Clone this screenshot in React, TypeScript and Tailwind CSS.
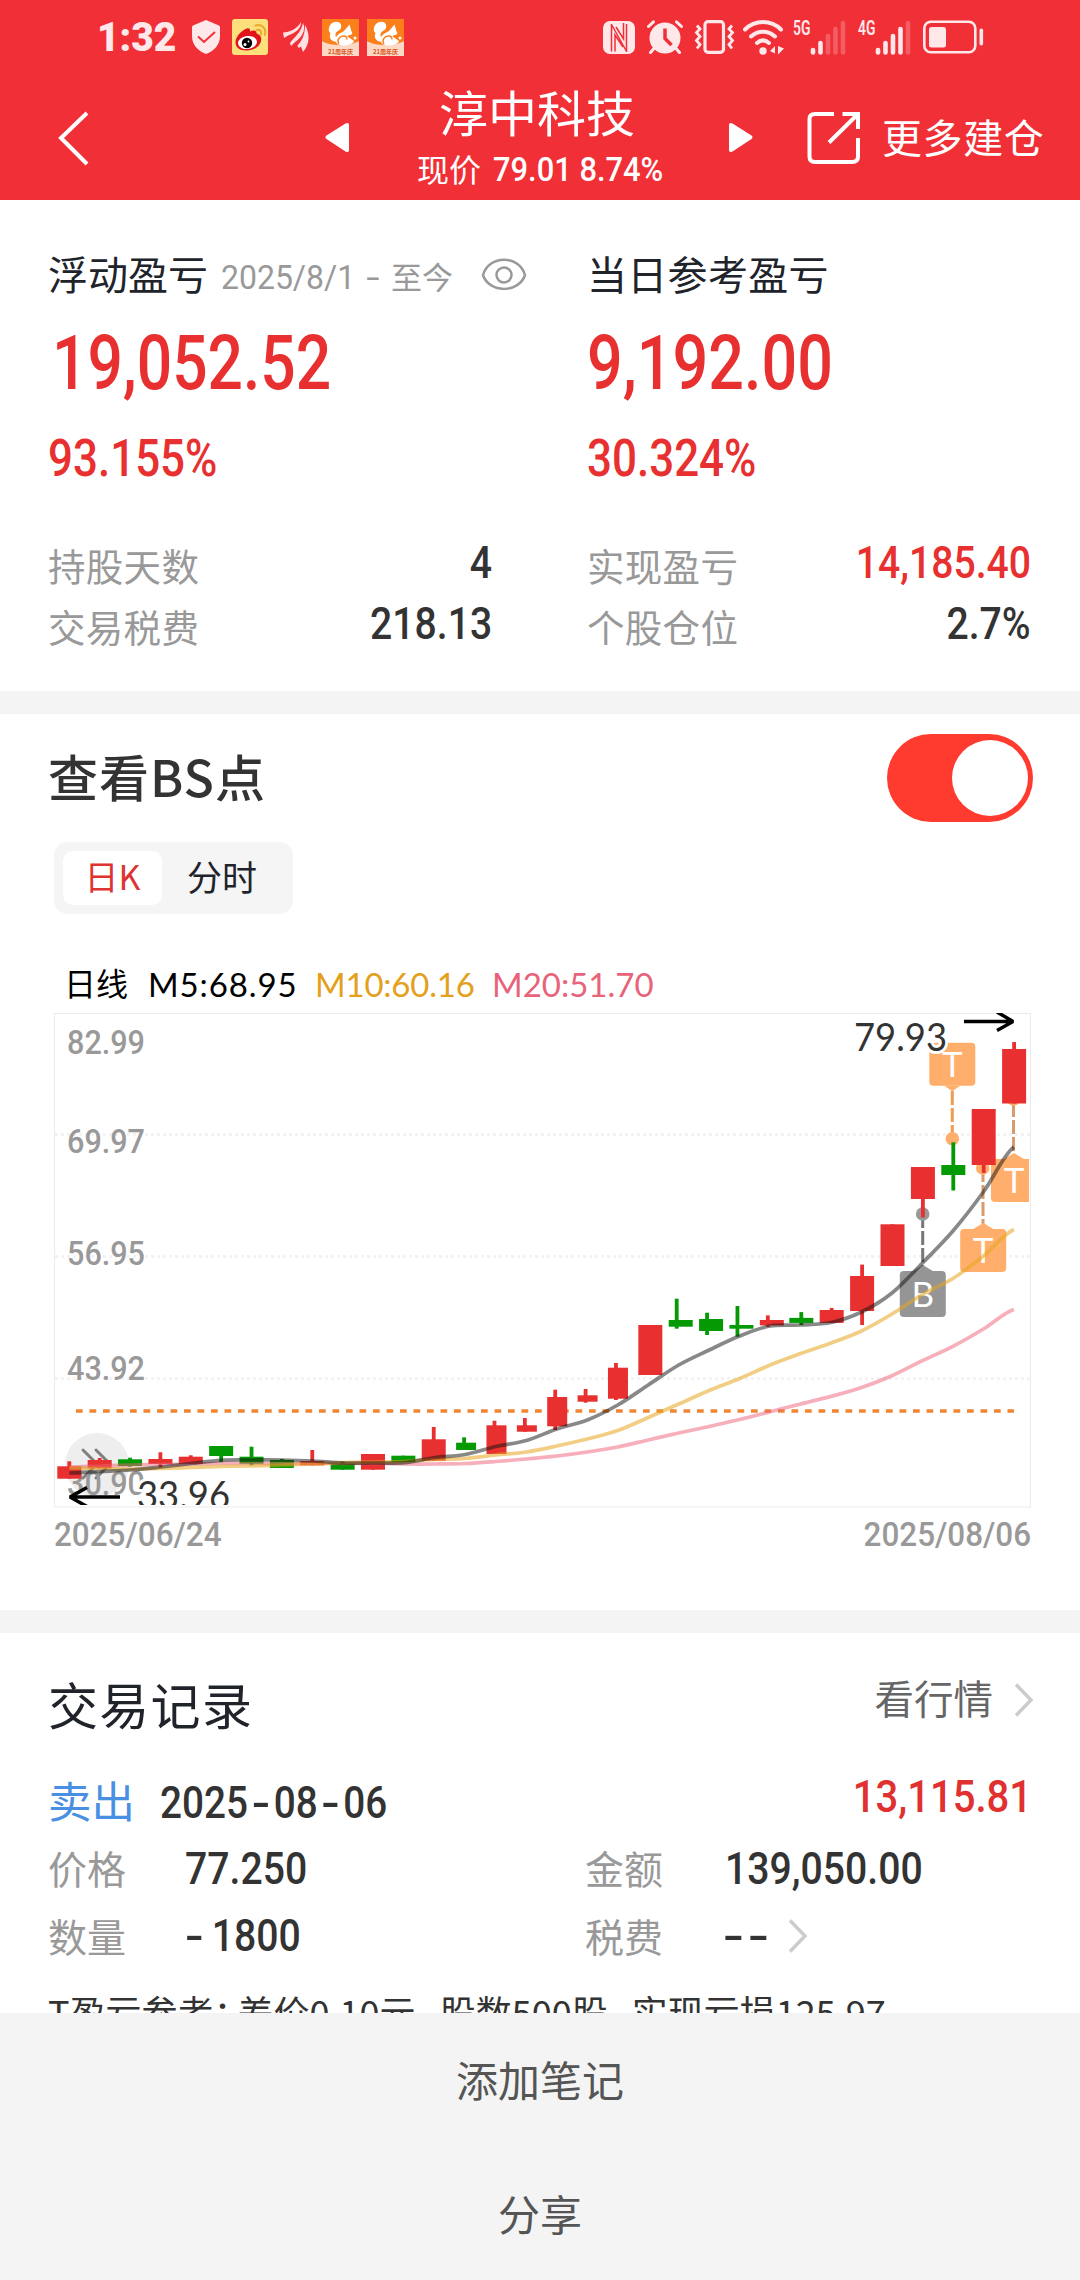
import React from 'react';

type Tone = 'up' | 'down';

interface ICandle {
  tone: Tone;
  top: number;
  bottom: number;
  high: number;
  low: number;
}

interface IStat {
  label: string;
  value: string;
  className: string;
}

const c = (
  tone: Tone,
  top: number,
  bottom: number,
  high: number,
  low: number
): ICandle => ({ tone, top, bottom, high, low });

const FIRST_X = 69.3;
const STEP = 30.47;

const candles: ICandle[] = [
  c('up', 1466.3, 1478.7, 1461.3, 1478.7),
  c('up', 1460, 1468.3, 1458, 1468.3),
  c('down', 1459.3, 1466, 1457.7, 1466.7),
  c('up', 1459, 1464, 1452.3, 1467.3),
  c('up', 1456.7, 1464, 1455.3, 1464),
  c('down', 1446, 1456, 1446, 1462),
  c('down', 1456.7, 1463.7, 1446.7, 1465.3),
  c('down', 1460, 1468, 1459, 1468),
  c('up', 1461, 1465.3, 1450, 1465.3),
  c('down', 1463.7, 1469.7, 1461.3, 1469.7),
  c('up', 1454, 1469.7, 1454, 1469.7),
  c('down', 1455.7, 1462, 1455.7, 1462),
  c('up', 1439.3, 1460.7, 1427, 1460.7),
  c('down', 1442.7, 1450, 1437.3, 1450),
  c('up', 1425.3, 1454, 1420.7, 1454),
  c('up', 1425.3, 1431.7, 1418, 1431.7),
  c('up', 1397, 1426.3, 1389.7, 1430),
  c('up', 1395.3, 1401.7, 1389, 1402.7),
  c('up', 1367.7, 1398.7, 1363, 1400),
  c('up', 1325, 1375, 1325, 1375),
  c('down', 1320, 1326.7, 1298.7, 1328.7),
  c('down', 1319, 1331, 1312.7, 1335),
  c('down', 1325, 1328.7, 1306, 1336.7),
  c('up', 1320, 1325.4, 1315.4, 1326.8),
  c('down', 1317.9, 1322.9, 1312.1, 1325),
  c('up', 1310, 1322.9, 1307.9, 1322.9),
  c('up', 1276, 1311, 1264.6, 1325),
  c('up', 1224.3, 1266, 1224.3, 1266),
  c('up', 1167, 1199, 1167, 1217.5),
  c('down', 1165, 1175, 1142.3, 1190.5),
  c('up', 1109, 1165, 1109, 1173),
  c('up', 1049, 1103.5, 1042, 1103.5),
];

const ma5 = [
  1473, 1471.5, 1470, 1467, 1463.5, 1460.3, 1460, 1460, 1461, 1463, 1463, 1462.7,
  1457.5, 1454.5, 1446.5, 1440.5, 1429, 1420, 1405, 1385, 1365, 1350, 1336, 1326,
  1325, 1322.5, 1312, 1293, 1263, 1231, 1192, 1147,
];
const ma10 = [
  1468, 1468.5, 1469, 1468.5, 1467.5, 1466.5, 1466, 1465, 1464, 1462.5, 1462, 1461.5,
  1459.5, 1458.5, 1455, 1452, 1446, 1439, 1430.5, 1417.5, 1404, 1390.5, 1378.5, 1365,
  1353.6, 1343, 1331, 1314, 1294.5, 1278.5, 1256, 1229.5,
];
const ma20 = [
  1467, 1466, 1465, 1464.5, 1464, 1463.5, 1463.5, 1463.5, 1463.5, 1463.5, 1463.5, 1464,
  1464, 1463.5, 1461.5, 1459, 1456, 1452, 1447, 1440, 1433, 1426.5, 1419.5, 1411.8,
  1404, 1396.4, 1387.5, 1375.7, 1360.7, 1346.4, 1329, 1309.5,
];

const pointX = (i: number) => FIRST_X + STEP * i;

// Wick position, then the body's left edge and width around it
const candleBox = (i: number) => {
  const x = i < 24 ? FIRST_X + 30.37 * i : 801.3 + 30.4 * (i - 24);
  const shifted = i > 12 && i < 24;
  return { x, left: shifted ? x - 8 : x - 12, width: i > 12 && i < 19 ? 20 : 24 };
};

// Smooths a series with Catmull-Rom control points
const toPath = (ys: number[]) =>
  ys.reduce((d, y, i) => {
    const x = pointX(i);
    if (i === 0) return `M${x} ${y}`;
    const before = ys[i - 2] ?? ys[i - 1];
    const prev = ys[i - 1];
    const next = ys[i + 1] ?? y;
    const third = STEP / 3;
    return `${d}C${x - 2 * third} ${prev + (y - before) / 6} ${x - third} ${
      y - (next - prev) / 6
    } ${x} ${y}`;
  }, '');

const axis = [
  { label: '82.99', y: 1054 },
  { label: '69.97', y: 1153 },
  { label: '56.95', y: 1265 },
  { label: '43.92', y: 1380 },
  { label: '30.90', y: 1495 },
];

const leftStats: IStat[] = [
  { label: '持股天数', value: '4', className: 'text-[#333]' },
  { label: '交易税费', value: '218.13', className: 'text-[#333]' },
];
const rightStats: IStat[] = [
  { label: '实现盈亏', value: '14,185.40', className: 'text-[#e7302f]' },
  { label: '个股仓位', value: '2.7%', className: 'text-[#333]' },
];

function ShieldIcon() {
  return (
    <svg className="w-7 h-[34px]" viewBox="0 0 28 34">
      <path d="M14 0 27 5.500Q28 6 28 7.500V16C28 25 22 31 14 34 6 31 0 25 0 16V7.500Q0 6 1 5.500Z" fill="#ffe8ea" />
      <path d="M6 16.500 12 22 23 12" fill="none" stroke="#f12f37" strokeWidth="2" />
    </svg>
  );
}

function WeiboIcon() {
  return (
    <svg className="w-9 h-9" viewBox="0 0 36 36">
      <rect width="36" height="36" rx="3" fill="#fddf7c" />
      <path d="M15 9.500c2-.8 3.500.5 3 3 3-1.500 7-1.500 6.500 2 2.500.8 5 2.500 4.700 6C29 27 22 31.500 14.500 31.500S3.500 28 3.500 23C3.500 18 10 10.800 15 9.500Z" fill="#e2141b" />
      <ellipse cx="15.500" cy="23.500" rx="9.500" ry="6.500" fill="#fff" transform="rotate(-7 15.500 23.500)" />
      <circle cx="15" cy="24" r="5.200" fill="#000" />
      <circle cx="13" cy="25.500" r="1.500" fill="#fff" />
      <circle cx="16.500" cy="22.500" r=".9" fill="#fff" />
      <g fill="none" stroke="#eba92c" strokeWidth="2" strokeLinecap="round">
        <path d="M23.500 6.500C29.500 4.500 35 9.500 32.800 16" />
        <path d="M24.500 11C28 10 30 12.500 29 15.500" />
      </g>
    </svg>
  );
}

function WingIcon() {
  return (
    <svg className="w-[26px] h-[30px]" viewBox="0 0 26 30" fill="#ffe0e3">
      <path d="M0 10.500C7 10 14 7 18 0c.8 7-8 12-12 13L1 16Z" />
      <path d="M7 21C11 15 18 11 20 1c4 8-3 16-8.500 19.500L8 24Z" />
      <path d="M14.500 23.500C20 18 22 11 22 3c5.500 9 4.500 20-2 27L18 24.500 15.500 26Z" />
    </svg>
  );
}

function SquirrelIcon() {
  return (
    <svg className="w-[37px] h-[37px]" viewBox="0 0 37 37">
      <rect width="37" height="37" fill="#fb7f1b" />
      <path d="M0 22C8 27.500 28 27.500 37 22V37H0Z" fill="#fbd9c4" />
      <path d="M13 3C17.500 2 21 6 18.500 10 17 12 14 12 13.500 15c-.3 2.500 1.500 3.500 1 8-5.500-1-8-4-6-9C5 12.500 7 3.500 13 3Z" fill="#fff" />
      <path d="M22 12 27.500 5.500 29.500 12.500C31 14 30.500 16 27 16l-1.500 1.500 6.500 4.500c-.5 4.500-16 7-18 1C12 18 16 15 22 12Z" fill="#fff" />
      <path d="M17 25c-3-4 1-8 4.500-8 2 0 3.500 1.500 3.500 3.500" fill="none" stroke="#fb7f1b" strokeWidth="1.300" />
      <circle cx="33" cy="19" r="1.500" fill="#fff" />
      <text x="18.500" y="35" textAnchor="middle" className="font-['Noto_Sans_CJK_SC',sans-serif] text-[6px] font-bold" fill="#d9541c">
        21周年庆
      </text>
    </svg>
  );
}

function NfcIcon() {
  return (
    <svg className="w-8 h-[33px]" viewBox="0 0 32 33">
      <rect width="32" height="33" rx="7" fill="#ffe8ea" />
      <path d="M8.500 3V30.500M23.500 3V31M8.500 3.500 23 29.500M12 30.500V14L20 26M20.500 2V18L13 6" fill="none" stroke="#f12f37" strokeWidth="1.500" />
    </svg>
  );
}

function AlarmIcon() {
  return (
    <svg className="w-9 h-[34px]" viewBox="0 0 36 34">
      <circle cx="18" cy="18" r="15.500" fill="#ffe8ea" />
      <g fill="none" stroke="#ffe8ea" strokeWidth="3" strokeLinecap="round">
        <path d="M1.500 6.500 6.500 1.800M34.500 6.500 29.500 1.800M6.500 29 3.500 32.500M29.500 29 32.500 32.500" />
      </g>
      <path d="M18 8.500V18.500L24.500 25" fill="none" stroke="#f12f37" strokeWidth="3.500" />
    </svg>
  );
}

function VibrateIcon() {
  return (
    <svg className="w-[41px] h-[34px]" viewBox="0 0 41 34" fill="none" stroke="#ffe8ea">
      <rect x="11" y="1.700" width="18.500" height="30.600" rx="3" strokeWidth="3.200" />
      <path d="M3 5.500 6 9 2.500 12.500 6 16.500 2.500 20.500 6 24.500 3 28.500M38 5.500 35 9 38.500 12.500 35 16.500 38.500 20.500 35 24.500 38 28.500" strokeWidth="2.800" />
    </svg>
  );
}

function WifiIcon() {
  return (
    <svg className="w-[42px] h-[35px]" viewBox="0 0 42 35">
      <g fill="none" stroke="#ffe8ea" strokeWidth="4" strokeLinecap="round">
        <path d="M2 9.500C12-.5 28-.5 38 9.500" />
        <path d="M8 16.500C15 10 25 10 32 16.500" />
        <path d="M14 23C18 19.500 22 19.500 26 23" />
      </g>
      <circle cx="20" cy="31" r="3.700" fill="#ffe8ea" />
      <path d="M32 26V33.500L27 31ZM35 26 41 28.500 35 34.500Z" fill="#ffe8ea" />
    </svg>
  );
}

function SignalIcon({ label, strength }: { label: string; strength: number }) {
  return (
    <div className="flex items-start">
      <span className="w-[17px] h-[35px] font-['Roboto',sans-serif] text-[21px]/[16px] font-semibold">
        <span className="inline-block origin-left scale-x-[0.66]">{label}</span>
      </span>
      <svg className="w-[36px] h-[35px]" viewBox="0 0 36 35" stroke="#ffe8ea" strokeWidth="4.600" strokeLinecap="round">
        {[29, 23, 16, 9, 3].map((y, i) => (
          <path
            key={y}
            d={`M${3 + i * 7.500} ${i === 0 ? 30 : y}V32.500`}
            opacity={i < strength ? 1 : 0.25}
          />
        ))}
      </svg>
    </div>
  );
}

function BatteryIcon() {
  return (
    <svg className="w-[61px] h-[34px]" viewBox="0 0 61 34">
      <rect x="1.300" y="1.800" width="51" height="30.500" rx="6.500" fill="none" stroke="#ffe8ea" strokeWidth="2.600" />
      <rect x="6" y="7" width="17" height="20.500" rx="2.500" fill="#ffe8ea" />
      <rect x="56.500" y="8.500" width="3.600" height="17" rx="1.800" fill="#ffe8ea" />
    </svg>
  );
}

function StatusBar() {
  return (
    <div className="flex h-[74px] pl-[97px] pr-[96px] items-center justify-between text-[#ffe8ea]">
      <div className="flex items-center">
        <span className="w-[95px] font-['Roboto',sans-serif] text-[41px]/[40px] font-black">
          <span className="inline-block origin-left scale-x-[0.95]">1:32</span>
        </span>
        <ShieldIcon />
        <span className="ml-3 mr-[15px]">
          <WeiboIcon />
        </span>
        <WingIcon />
        <span className="ml-[13px] mr-2">
          <SquirrelIcon />
        </span>
        <SquirrelIcon />
      </div>
      <div className="flex items-center">
        <NfcIcon />
        <span className="ml-3">
          <AlarmIcon />
        </span>
        <span className="ml-[11px]">
          <VibrateIcon />
        </span>
        <span className="ml-2">
          <WifiIcon />
        </span>
        <span className="ml-2">
          <SignalIcon label="5G" strength={2} />
        </span>
        <span className="ml-3">
          <SignalIcon label="4G" strength={4} />
        </span>
        <span className="ml-3">
          <BatteryIcon />
        </span>
      </div>
    </div>
  );
}

function Header() {
  return (
    <header className="h-[200px] shrink-0 bg-[#f12f37] text-white">
      <StatusBar />
      <div className="flex h-[126px]">
        <svg className="mt-9 ml-[57px] w-8 h-14" viewBox="0 0 32 56" fill="none" stroke="#fff" strokeWidth="4">
          <path d="M30 3 4 28 30 54" />
        </svg>
        <svg className="mt-[48px] ml-[236px] w-[26px] h-[31px]" viewBox="0 0 26 31" fill="#fff">
          <path d="M1.500 13.500 20.500 1.500Q24 0 24 3V28Q24 31 20.500 29.500L1.500 17Q-.5 15.200 1.500 13.500Z" />
        </svg>
        <div className="w-[378px]">
          <div className="mt-[9px] h-[56px] pl-[88px] text-[49px]/[56px]">淳中科技</div>
          <div className="flex h-10 mt-[12px] pl-[66px] text-[32px]/[34px]">
            <span>现价</span>
            <span className="ml-3 mt-[2px] font-['Roboto',sans-serif] text-[33px]/[34px] font-medium origin-left scale-x-[0.935] whitespace-nowrap">
              79.01 8.74%
            </span>
          </div>
        </div>
        <svg className="mt-[48px] w-[26px] h-[31px]" viewBox="0 0 26 31" fill="#fff">
          <path d="M22.500 13.500 3.500 1.500Q0 0 0 3V28Q0 31 3.500 29.500L22.500 17Q24.500 15.200 22.500 13.500Z" />
        </svg>
        <svg className="mt-[36px] ml-[52px] w-[54px] h-[56px]" viewBox="0 0 54 56" fill="none" stroke="#fff" strokeWidth="4">
          <path d="M27 4H8Q2.500 4 2.500 9V46.500Q2.500 52 8 52H45Q51 52 51 46.500V28M35.500 4H51V19M50 5 22 32.500" />
        </svg>
        <span className="mt-[39px] ml-[21px] text-[40px]/[46px] tracking-[0.6px]">更多建仓</span>
      </div>
    </header>
  );
}

function Stats({ items }: { items: IStat[] }) {
  return (
    <div className="mt-[43px]">
      {items.map((item) => (
        <div key={item.label} className="flex h-[61px] items-center justify-between">
          <span className="pt-[6px] text-[37.500px]/[46px] tracking-[0.3px] text-[#999]">{item.label}</span>
          <span
            className={`pt-[2px] font-['Roboto',sans-serif] text-[44px]/[50px] font-medium origin-right scale-x-[0.89] ${item.className}`}
          >
            {item.value}
          </span>
        </div>
      ))}
    </div>
  );
}

function Summary() {
  return (
    <section className="flex h-[491px] shrink-0 pt-[48px] pl-12">
      <div className="w-[444px]">
        <div className="flex h-[50px] items-center whitespace-nowrap">
          <span className="w-[173px] shrink-0 text-[40px]/[50px] text-[#20242a]">浮动盈亏</span>
          <span className="w-[170px] shrink-0 pt-[7px] font-['Roboto',sans-serif] text-[34px]/[50px] text-[#999] origin-left scale-x-[0.94]">
            2025/8/1<span className="ml-[14px] inline-block scale-x-[1.5]">-</span>
          </span>
          <span className="w-[62px] shrink-0 pt-[6px] text-[31px]/[50px] text-[#999]">至今</span>
          <svg className="ml-[28px] mt-[2px] w-[46px] h-8 shrink-0" viewBox="0 0 46 32" fill="none" stroke="#999" strokeWidth="2.500">
            <path d="M2 17C8-3.500 38-3.500 44 17 38 35.500 8 35.500 2 17Z" />
            <circle cx="23" cy="17" r="7.500" />
          </svg>
        </div>
        <div className="mt-[25px] h-20 pl-1 font-['Roboto',sans-serif] text-[76px]/[80px] font-medium text-[#e7302f]">
          <span className="inline-block origin-left scale-x-[0.82]">19,052.52</span>
        </div>
        <div className="mt-[27px] h-[58px] font-['Roboto',sans-serif] text-[52px]/[58px] font-medium text-[#e7302f]">
          <span className="inline-block origin-left scale-x-[0.845]">93.155%</span>
        </div>
        <Stats items={leftStats} />
      </div>
      <div className="ml-[95px] w-[444px]">
        <div className="h-[50px] text-[40px]/[50px] tracking-[0.3px] text-[#20242a]">当日参考盈亏</div>
        <div className="mt-[25px] h-20 font-['Roboto',sans-serif] text-[76px]/[80px] font-medium text-[#e7302f]">
          <span className="inline-block origin-left scale-x-[0.827]">9,192.00</span>
        </div>
        <div className="mt-[27px] h-[58px] font-['Roboto',sans-serif] text-[52px]/[58px] font-medium text-[#e7302f]">
          <span className="inline-block origin-left scale-x-[0.845]">30.324%</span>
        </div>
        <Stats items={rightStats} />
      </div>
    </section>
  );
}

interface IFlag {
  letter: string;
  x: number;
  y: number;
  height: number;
  color: string;
  down?: boolean;
}

function Flag({ letter, x, y, height, color, down }: IFlag) {
  const tip = down
    ? `M${x - 8} ${y + height}H${x + 8}L${x} ${y + height + 5.500}Z`
    : `M${x - 10} ${y}L${x} ${y - 6}L${x + 10} ${y}Z`;
  return (
    <g>
      <rect x={x - 23} y={y} width="46" height={height} rx="4" fill={color} />
      <path d={tip} fill={color} />
      <text
        x={x}
        y={y + height / 2 + 12.500}
        textAnchor="middle"
        className="font-['Lato',sans-serif] text-[35px]"
        fill="#fff"
      >
        {letter}
      </text>
    </g>
  );
}

function KLineChart() {
  return (
    <svg className="block ml-[54px] mt-2 w-[978px] h-[496px]" viewBox="54 1012 978 496">
      <defs>
        <clipPath id="plot">
          <rect x="55" y="1013" width="974" height="492" />
        </clipPath>
      </defs>
      <rect x="54.500" y="1013.500" width="976" height="493.500" fill="none" stroke="#ebebeb" />
      <g stroke="#f3f3f3" strokeWidth="3" strokeDasharray="3 3">
        {[1134.500, 1256.500, 1378.500].map((y) => (
          <path key={y} d={`M55 ${y}H1030`} />
        ))}
      </g>
      <circle cx="97" cy="1465" r="32" fill="#eee" />
      <path d="M83 1450 97 1464 83 1478M96 1450 110 1464 96 1478" fill="none" stroke="#808080" strokeWidth="3" strokeLinecap="round" />
      <g className="font-['Roboto',sans-serif] text-[34px] font-medium" fill="#999">
        {axis.map(({ label, y }) => (
          <text key={label} x="67" y={y} textLength="78" lengthAdjust="spacingAndGlyphs">
            {label}
          </text>
        ))}
      </g>
      <path d="M76 1411H1014" stroke="#ee8636" strokeWidth="3.700" strokeDasharray="6.700 6.800" />
      <g clipPath="url(#plot)">
        <g className="font-['Lato',sans-serif] text-[39px]" fill="#333" stroke="#fff" strokeWidth="6" paintOrder="stroke">
          <text x="137" y="1509" textLength="93" lengthAdjust="spacingAndGlyphs">33.96</text>
        </g>
        <g strokeWidth="3" strokeDasharray="14 3">
          <path d="M952.300 1091V1138" stroke="#f09a52" />
          <path d="M983 1168V1224" stroke="#d99a6c" />
          <path d="M1013.500 1103V1154" stroke="#d99a6c" />
          <path d="M922.700 1214V1266" stroke="#777" />
        </g>
        <circle cx="952.300" cy="1138.700" r="6.800" fill="#ffae6b" />
        <circle cx="982.700" cy="1168" r="6.800" fill="#ffae6b" />
        <circle cx="1013.500" cy="1099" r="6.800" fill="#ffae6b" />
        <circle cx="922.700" cy="1214" r="6.800" fill="#999" />
        <Flag letter="T" x={952.300} y={1042.700} height={43} color="#ffae6b" down />
        <Flag letter="B" x={922.800} y={1271} height={46} color="#959595" />
        <Flag letter="T" x={983.200} y={1229} height={43} color="#ffae6b" />
        <Flag letter="T" x={1014} y={1159} height={43} color="#ffae6b" />
        {candles.map(({ tone, top, bottom, high, low }, i) => {
          const { x, left, width } = candleBox(i);
          return (
            <g key={i} fill={tone === 'up' ? '#e7302f' : '#049a04'}>
              <rect x={x - 1.900} y={high} width="3.800" height={low - high} />
              <rect x={left} y={top} width={width} height={bottom - top} />
            </g>
          );
        })}
        <g fill="none" strokeWidth="3.700">
          <path d={toPath(ma20)} stroke="#ee6078" opacity=".5" />
          <path d={toPath(ma10)} stroke="#e6a51e" opacity=".55" />
          <path d={toPath(ma5)} stroke="#111" opacity=".5" />
        </g>
        <g fill="none" stroke="#000" strokeWidth="3.500" strokeLinejoin="bevel">
          <path d="M964 1021.500H1013M997 1012 1013 1021.500 997 1030.500" />
          <path d="M120 1497H70M87 1487.500 70 1497 87 1506.500" />
        </g>
        <g className="font-['Lato',sans-serif] text-[39px]" fill="#333" stroke="#fff" strokeWidth="6" paintOrder="stroke">
          <text x="854" y="1051" textLength="93" lengthAdjust="spacingAndGlyphs">79.93</text>
        </g>
      </g>
    </svg>
  );
}

function ChartSection() {
  return (
    <section className="h-[896px] shrink-0 pt-5">
      <div className="flex h-[88px] pl-12 pr-[47px] items-center justify-between">
        <h2 className="pb-[6px] text-[50px]/[60px] tracking-[1px] font-medium text-[#333]">查看BS点</h2>
        <div className="flex w-[146px] h-[88px] pr-[5px] rounded-full bg-[#ff3b30] items-center justify-end">
          <div className="w-[76px] h-[76px] rounded-full bg-white" />
        </div>
      </div>
      <div className="flex mt-5 ml-[54px] w-[239px] h-[72px] p-[9px] rounded-[14px] bg-[#f5f5f5] text-[34px]/[50px]">
        <div className="w-[99px] h-[54px] rounded-[10px] bg-white text-center text-[#dd3431]">日K</div>
        <div className="w-[122px] pr-[2px] text-center text-[35px]/[50px] text-[#20242a]">分时</div>
      </div>
      <div className="flex mt-[49px] h-[41px] pl-16 items-center font-['Lato','Noto_Sans_CJK_SC',sans-serif] text-[33px]/[40px]">
        <span className="w-[84px] text-[32px]/[40px] text-black">日线</span>
        <span className="w-[167px] tracking-[0.9px] text-black">M5:68.95</span>
        <span className="w-[177px] tracking-[-0.2px] text-[#e3a01c]">M10:60.16</span>
        <span className="text-[#e8637a]">M20:51.70</span>
      </div>
      <KLineChart />
      <div className="flex h-[52px] pl-[54px] pr-[49px] items-center justify-between font-['Roboto',sans-serif] text-[34px]/[40px] font-medium text-[#999]">
        <span className="origin-left scale-x-[0.925]">2025/06/24</span>
        <span className="origin-right scale-x-[0.925]">2025/08/06</span>
      </div>
    </section>
  );
}

function ChevronRight() {
  return (
    <svg className="w-5 h-[34px]" viewBox="0 0 20 34" fill="none" stroke="#ccc" strokeWidth="3.500">
      <path d="M2 1.500 17 17 2 32.500" />
    </svg>
  );
}

function Records() {
  return (
    <section className="h-[380px] shrink-0 pt-[30px] pl-12 pr-[46px] overflow-hidden">
      <div className="flex h-20 items-center justify-between">
        <h2 className="text-[50px]/[60px] tracking-[1.3px] text-[#20242a]">交易记录</h2>
        <div className="flex mb-[13px] items-center">
          <span className="mr-[21px] text-[39.500px]/[50px] text-[#666]">看行情</span>
          <span className="mt-[7px]">
            <ChevronRight />
          </span>
        </div>
      </div>
      <div className="flex mt-[30px] h-[60px] items-center">
        <span className="mb-[6px] w-[112px] text-[43.500px]/[60px] text-[#4a90e2]">卖出</span>
        <span className="pt-[2px] font-['Roboto',sans-serif] text-[43.500px]/[60px] text-[#333] font-medium origin-left scale-x-[0.89]">
          2025<span className="mx-[7px] inline-block scale-x-[1.4]">-</span>08
          <span className="mx-[7px] inline-block scale-x-[1.4]">-</span>06
        </span>
        <span className="mb-[12px] mr-[2px] ml-auto font-['Roboto',sans-serif] text-[44px]/[60px] font-medium text-[#e0302f] origin-right scale-x-[0.91]">
          13,115.81
        </span>
      </div>
      <div className="flex mt-[6px] h-[60px] items-center">
        <span className="mb-[4px] w-[137px] text-[39px]/[60px] text-[#999]">价格</span>
        <span className="w-[400px] font-['Roboto',sans-serif] text-[44px]/[60px] font-medium text-[#333] origin-left scale-x-[0.89]">
          77.250
        </span>
        <span className="mb-[4px] w-[140px] text-[39px]/[60px] text-[#999]">金额</span>
        <span className="font-['Roboto',sans-serif] text-[44px]/[60px] font-medium text-[#333] origin-left scale-x-[0.89]">
          139,050.00
        </span>
      </div>
      <div className="flex mt-[7px] h-[60px] items-center">
        <span className="mb-[2px] w-[137px] text-[39px]/[60px] text-[#999]">数量</span>
        <span className="w-[400px] font-['Roboto',sans-serif] text-[44px]/[60px] font-medium text-[#333] origin-left scale-x-[0.89]">
          <span className="ml-[3px] mr-3 inline-block scale-x-[1.4]">-</span>1800
        </span>
        <span className="mb-[2px] w-[140px] text-[39px]/[60px] text-[#999]">税费</span>
        <span className="w-[63px] font-['Roboto',sans-serif] text-[44px]/[60px] font-medium text-[#333]">
          <span className="mx-[1px] inline-block scale-x-[1.4]">-</span>
          <span className="ml-[9px] inline-block scale-x-[1.4]">-</span>
        </span>
        <ChevronRight />
      </div>
      <div className="mt-[25px] h-10 whitespace-pre text-[36px]/[40px] text-[#333]">
        T盈亏参考<span className="-mr-[12px]">：</span>差价0.10元&nbsp;&nbsp; 股数500股&nbsp;&nbsp; 实现亏损125.97
      </div>
    </section>
  );
}

function App() {
  return (
    <div className="flex flex-col w-[1080px] h-[2280px] overflow-hidden bg-white font-['Noto_Sans_CJK_SC',sans-serif]">
      <Header />
      <Summary />
      <div className="h-[23px] shrink-0 bg-[#f4f4f4]" />
      <ChartSection />
      <div className="h-[23px] shrink-0 bg-[#f4f4f4]" />
      <Records />
      <footer className="h-[267px] shrink-0 bg-[#f4f4f4] text-center text-[42px]/[132px] text-[#555]">
        <div className="h-[134px]">添加笔记</div>
        <div className="h-[133px]">分享</div>
      </footer>
    </div>
  );
}

export default App;
